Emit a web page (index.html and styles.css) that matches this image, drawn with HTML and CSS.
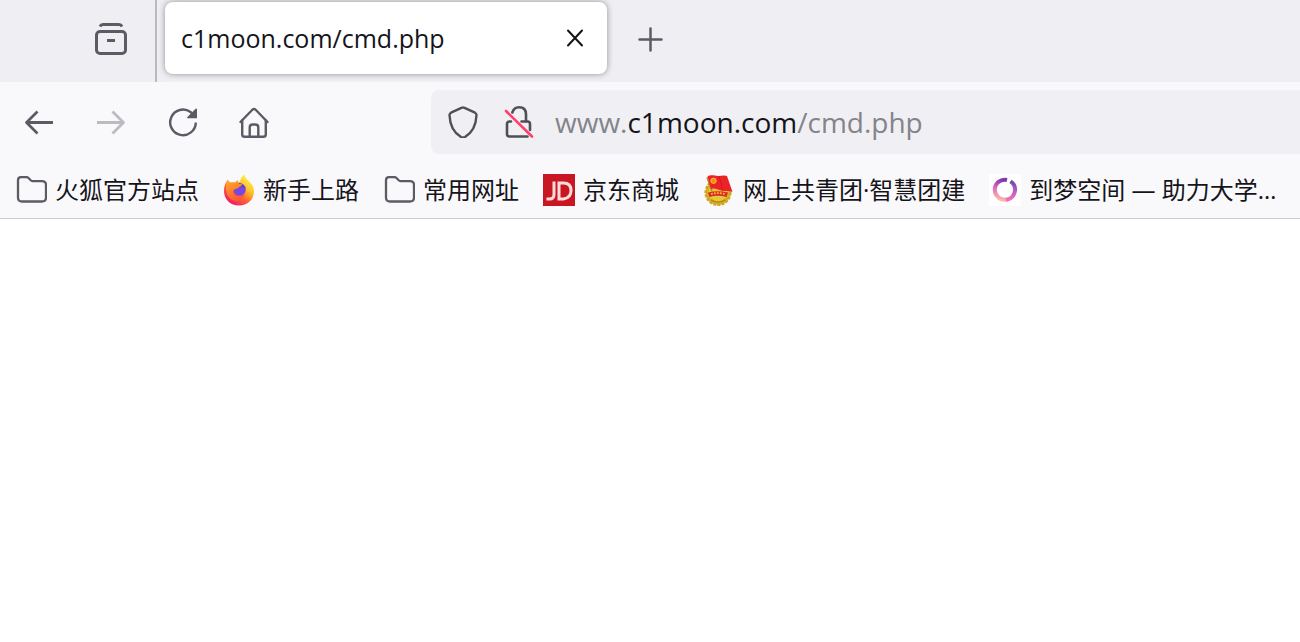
FILE: index.html
```
<!DOCTYPE html>
<html lang="zh-CN">
<head>
  <meta charset="UTF-8" />
  <meta name="viewport" content="width=device-width, initial-scale=1" />
  <title>c1moon.com/cmd.php</title>
  <link rel="stylesheet" href="styles.css">
</head>
<body>
  <header class="browser">
    <div class="tab-strip">
      <div class="tab-tools">
        <button type="button" class="icon-button" aria-label="Firefox View">
          <svg viewBox="0 0 32 32" fill="none" stroke="currentColor" stroke-width="3">
            <path d="M5 3.500Q6 1.500 8 1.500h16q2 0 3 2" />
            <rect x="1.500" y="8.500" width="29" height="22" rx="3.500" />
            <path d="M12 17.500h8" />
          </svg>
        </button>
      </div>
      <div class="tab">
        <span class="tab-title">c1moon.com/cmd.php</span>
        <button type="button" class="icon-button close" aria-label="关闭标签页">
          <svg viewBox="0 0 32 32" fill="none" stroke="currentColor" stroke-width="2" stroke-linecap="round">
            <path d="M9 8.500l14 15M23 8.500l-14 15" />
          </svg>
        </button>
      </div>
      <button type="button" class="icon-button new-tab" aria-label="新建标签页">
        <svg viewBox="0 0 32 32" fill="none" stroke="currentColor" stroke-width="2.500" stroke-linecap="round">
          <path d="M16.500 5.500v22M5.500 16.500h22" />
        </svg>
      </button>
    </div>

    <nav class="nav-bar">
      <div class="nav-buttons">
        <button type="button" class="icon-button" aria-label="后退">
          <svg viewBox="0 0 32 32" fill="none" stroke="currentColor" stroke-width="2.800" stroke-linejoin="round">
            <path d="M14.500 5.500L3.500 16.500l11 11M3.500 16.500H30" />
          </svg>
        </button>
        <button type="button" class="icon-button" aria-label="前进" disabled>
          <svg viewBox="0 0 32 32" fill="none" stroke="currentColor" stroke-width="2.800" stroke-linejoin="round">
            <path d="M17.500 5.500l11 11-11 11M28.500 16.500H2" />
          </svg>
        </button>
        <button type="button" class="icon-button" aria-label="刷新">
          <svg viewBox="0 0 32 32" fill="none" stroke="currentColor" stroke-width="2.400">
            <path d="M28.800 16.500A12.800 12.800 0 1 1 23.500 6l2 2" />
            <path d="M30 3v9.300H20.700q-1.200-.3-.3-1.400l8-8q1-.7 1.600.1z" fill="currentColor" stroke="none" />
          </svg>
        </button>
        <button type="button" class="icon-button" aria-label="主页">
          <svg viewBox="0 0 32 32" fill="none" stroke="currentColor" stroke-width="2.400" stroke-linecap="round" stroke-linejoin="round">
            <path d="M1.500 16L13.600 3.500q1.400-1.200 2.800 0L28.500 16" />
            <path d="M3.200 14.500v14q0 2.300 2.500 2.300h18.600q2.500 0 2.500-2.300v-14" />
            <path d="M10.700 30.500V21.500q0-3 3-3h2.600q3 0 3 3v9" />
          </svg>
        </button>
      </div>
      <div class="url-bar">
        <div class="site-buttons">
          <button type="button" class="icon-button" aria-label="跟踪保护">
            <svg viewBox="0 0 32 32" fill="none" stroke="currentColor" stroke-width="2.400" stroke-linejoin="round">
              <path d="M15 1.700q1-.5 2 0l11 5q1.600.8 1.500 2.500C29 20 25.500 26.500 18 31q-2 1-4 0C6.500 26.500 3 20 2.500 9.200q-.1-1.700 1.500-2.500z" />
            </svg>
          </button>
          <button type="button" class="icon-button" aria-label="连接不安全">
            <svg viewBox="0 0 32 32" fill="none" stroke="currentColor" stroke-width="2.600" stroke-linecap="round">
              <path d="M9.300 6.500Q11 1.300 16 1.300q7 0 7 7V15" />
              <path d="M8 15.500H6.500q-2.500 0-2.500 2.500V28q0 2.500 2.500 2.500h18" />
              <path d="M18.500 15.500h6q2.500 0 2.500 2.500v6" />
              <path class="slash" d="M3 5l26 25.500" />
            </svg>
          </button>
        </div>
        <a class="url" href="#">www.<span class="domain">c1moon.com</span>/cmd.php</a>
      </div>
    </nav>

    <div class="bookmarks">
      <a class="bookmark" href="#">
        <svg class="folder" viewBox="0 0 32 32" fill="none" stroke="currentColor" stroke-width="2.300" stroke-linejoin="round">
          <path d="M6 3.200h5.500q1.200 0 2 .8l2.500 2.500q.8.700 2 .7h9q4 0 4 4v12.300q0 4-4 4H7q-4 0-4-4V6.500q0-3.300 3-3.300z" />
        </svg>
        <span>火狐官方站点</span>
      </a>
      <a class="bookmark" href="#">
        <svg viewBox="0 0 32 32">
          <defs>
            <linearGradient id="flame" x1="0.850" y1="0.100" x2="0.250" y2="0.950">
              <stop offset="0" stop-color="#fff04a" />
              <stop offset="0.350" stop-color="#ffc02a" />
              <stop offset="0.620" stop-color="#ff6a30" />
              <stop offset="1" stop-color="#f01c62" />
            </linearGradient>
            <linearGradient id="fox" x1="0" y1="0" x2="0.400" y2="1">
              <stop offset="0" stop-color="#ffb02a" />
              <stop offset="1" stop-color="#ff5c30" />
            </linearGradient>
          </defs>
          <path d="M21 0.500c1 3.500 4 5.500 6 8 2.500 2 4 5 4 9C31 25.500 24.500 31.500 16 31.500S1 25.500 1 17c0-4.500 1-7.500 3.500-10.500L8 9l9-1.500c.5-3 2-5 4-7z" fill="url(#flame)" />
          <circle cx="16.500" cy="15.500" r="6.300" fill="#7b45e0" />
          <path d="M13 10c4-2 8.500 0 9.800 4.500-1.300-1-3-1.500-4-.8z" fill="#5b3fd0" />
          <path d="M4.500 5.500l2.700 3.200c1.500-.6 3.300-.5 4.500 0l3.300-3c-.4 2 0 3.200.8 4l3.400.6c.2 1.700-2.600 2.500-3.600 3.100-.9 1.400-2.700 1.300-4.200 2-2.500 1.600-1.400 6 2.300 7 3.300.7 6-.5 8-2.700-1 5-5 7.300-9.500 7C6 26.300 3 20.500 3 13.500c0-3 .5-6 1.500-8z" fill="url(#fox)" />
        </svg>
        <span>新手上路</span>
      </a>
      <a class="bookmark" href="#">
        <svg class="folder" viewBox="0 0 32 32" fill="none" stroke="currentColor" stroke-width="2.300" stroke-linejoin="round">
          <path d="M6 3.200h5.500q1.200 0 2 .8l2.500 2.500q.8.700 2 .7h9q4 0 4 4v12.300q0 4-4 4H7q-4 0-4-4V6.500q0-3.300 3-3.300z" />
        </svg>
        <span>常用网址</span>
      </a>
      <a class="bookmark" href="#">
        <svg viewBox="0 0 32 32" fill="none" stroke="#ffdcdc" stroke-width="3">
          <rect width="32" height="32" fill="#c81623" stroke="none" />
          <path d="M11 7.500v13q0 4.500-4.500 4.500H3.500" />
          <path d="M16 9h4.500q7.500 0 7.500 7.500T20.500 25H16z" />
        </svg>
        <span>京东商城</span>
      </a>
      <a class="bookmark" href="#">
        <svg viewBox="0 0 32 32">
          <circle cx="15" cy="18.500" r="12.300" fill="#d6b02a" stroke="#cda521" stroke-width="2.500" stroke-dasharray="3 1.200" />
          <circle cx="15" cy="18" r="9.500" fill="#e6c93a" />
          <path d="M8 26q7 4 14 0" fill="none" stroke="#b98c15" stroke-width="1.500" />
          <path d="M4 3.500l5 14" stroke="#b98c15" stroke-width="1.500" />
          <path d="M4.500 2.500C9 0 12 2.500 16 2s6-1 8 0l5.500 16c-4-2-7-.5-11-1.500-4-1-7-3-10.500-1.500z" fill="#ed2228" />
          <path d="M16 2c1 5 3 9 3.500 15" fill="none" stroke="#cf1a20" />
          <circle cx="10.500" cy="6.800" r="2.700" fill="#f58a22" stroke="#ffc42e" />
          <path d="M5 18.500q10-2.500 20 0l-1.500 4.500q-8.500-2.500-17 0z" fill="#dc2c22" />
          <path d="M8 20q7-1.700 14 0" fill="none" stroke="#f0b840" stroke-width="1.800" stroke-dasharray="1.800 1.200" />
        </svg>
        <span>网上共青团·智慧团建</span>
      </a>
      <a class="bookmark" href="#">
        <svg viewBox="0 0 32 32" fill="none" stroke-width="4">
          <defs>
            <linearGradient id="ring" x1="0.600" y1="0" x2="0.400" y2="1">
              <stop offset="0" stop-color="#8038a8" />
              <stop offset="0.450" stop-color="#dc62c0" />
              <stop offset="1" stop-color="#ffb8a8" />
            </linearGradient>
            <linearGradient id="ring-end" x1="0" y1="0" x2="0" y2="1">
              <stop offset="0" stop-color="#6a4cac" />
              <stop offset="0.500" stop-color="#b45cc8" />
              <stop offset="1" stop-color="#fa6cb8" />
            </linearGradient>
          </defs>
          <rect width="32" height="32" fill="#fff" />
          <path d="M18 6A10 10 0 1 0 18 25.500" stroke="url(#ring)" />
          <path d="M21.500 7.400A10 10 0 0 1 17 25.700" stroke="url(#ring-end)" />
        </svg>
        <span>到梦空间 — 助力大学…</span>
      </a>
    </div>
  </header>

  <main class="page"></main>
</body>
</html>
```
FILE: styles.css
```
body {
  margin: 0;
  background-color: #fff;
  color: #15141a;
  font-family: "Open Sans", "Noto Sans CJK SC", sans-serif;
  font-size: 24px;
  overflow-x: hidden;
}

a {
  color: inherit;
  text-decoration: none;
}

svg {
  display: block;
  flex: none;
  width: 32px;
  height: 32px;
}

.browser {
  background-color: #f9f9fb;
  border-bottom: 1px solid #ccccce;
}

.icon-button {
  flex: none;
  padding: 0;
  border: none;
  background: none;
  color: #5b5b66;
}

.icon-button:disabled {
  color: #bcbcc0;
}

/* Tabs */
.tab-strip {
  display: flex;
  align-items: center;
  height: 82px;
  background-color: #efeef3;
}

.tab-tools {
  display: flex;
  align-items: center;
  justify-content: flex-end;
  box-sizing: border-box;
  width: 157px;
  height: 100%;
  padding: 0 28px 5px 0;
  border-right: 2px solid #b9b9bf;
}

.tab {
  display: flex;
  align-items: center;
  justify-content: space-between;
  box-sizing: border-box;
  width: 442px;
  height: 72px;
  margin: 0 27px 6px 8px;
  padding: 0 16px;
  border-radius: 8px;
  background-color: #fff;
  box-shadow: 0 0 6px rgba(0, 0, 0, 0.4);
}

.tab-title {
  font-size: 25px;
  line-height: 32px;
}

.close {
  color: #15141a;
}

.new-tab {
  margin-bottom: 4px;
}

/* Navigation */
.nav-bar {
  display: flex;
  align-items: center;
  height: 80px;
}

.nav-buttons {
  display: flex;
  gap: 40px;
  padding-left: 23px;
  margin-right: 160px;
}

.url-bar {
  display: flex;
  flex: 1;
  align-items: center;
  gap: 20px;
  height: 64px;
  padding-left: 16px;
  border-radius: 8px 0 0 8px;
  background-color: #f0f0f4;
  font-size: 28px;
}

.site-buttons {
  display: flex;
  gap: 24px;
}

.site-buttons .icon-button {
  color: #4f4f56;
}

.url {
  color: #84848a;
}

.domain {
  color: #15141a;
}

.slash {
  stroke: #ff4069;
}

/* Bookmarks */
.bookmarks {
  display: flex;
  align-items: center;
  gap: 24px;
  height: 56px;
  padding-left: 15px;
}

.bookmark {
  display: flex;
  align-items: center;
  gap: 8px;
  line-height: 32px;
  white-space: nowrap;
}

.folder {
  color: #5b5b66;
}
```
